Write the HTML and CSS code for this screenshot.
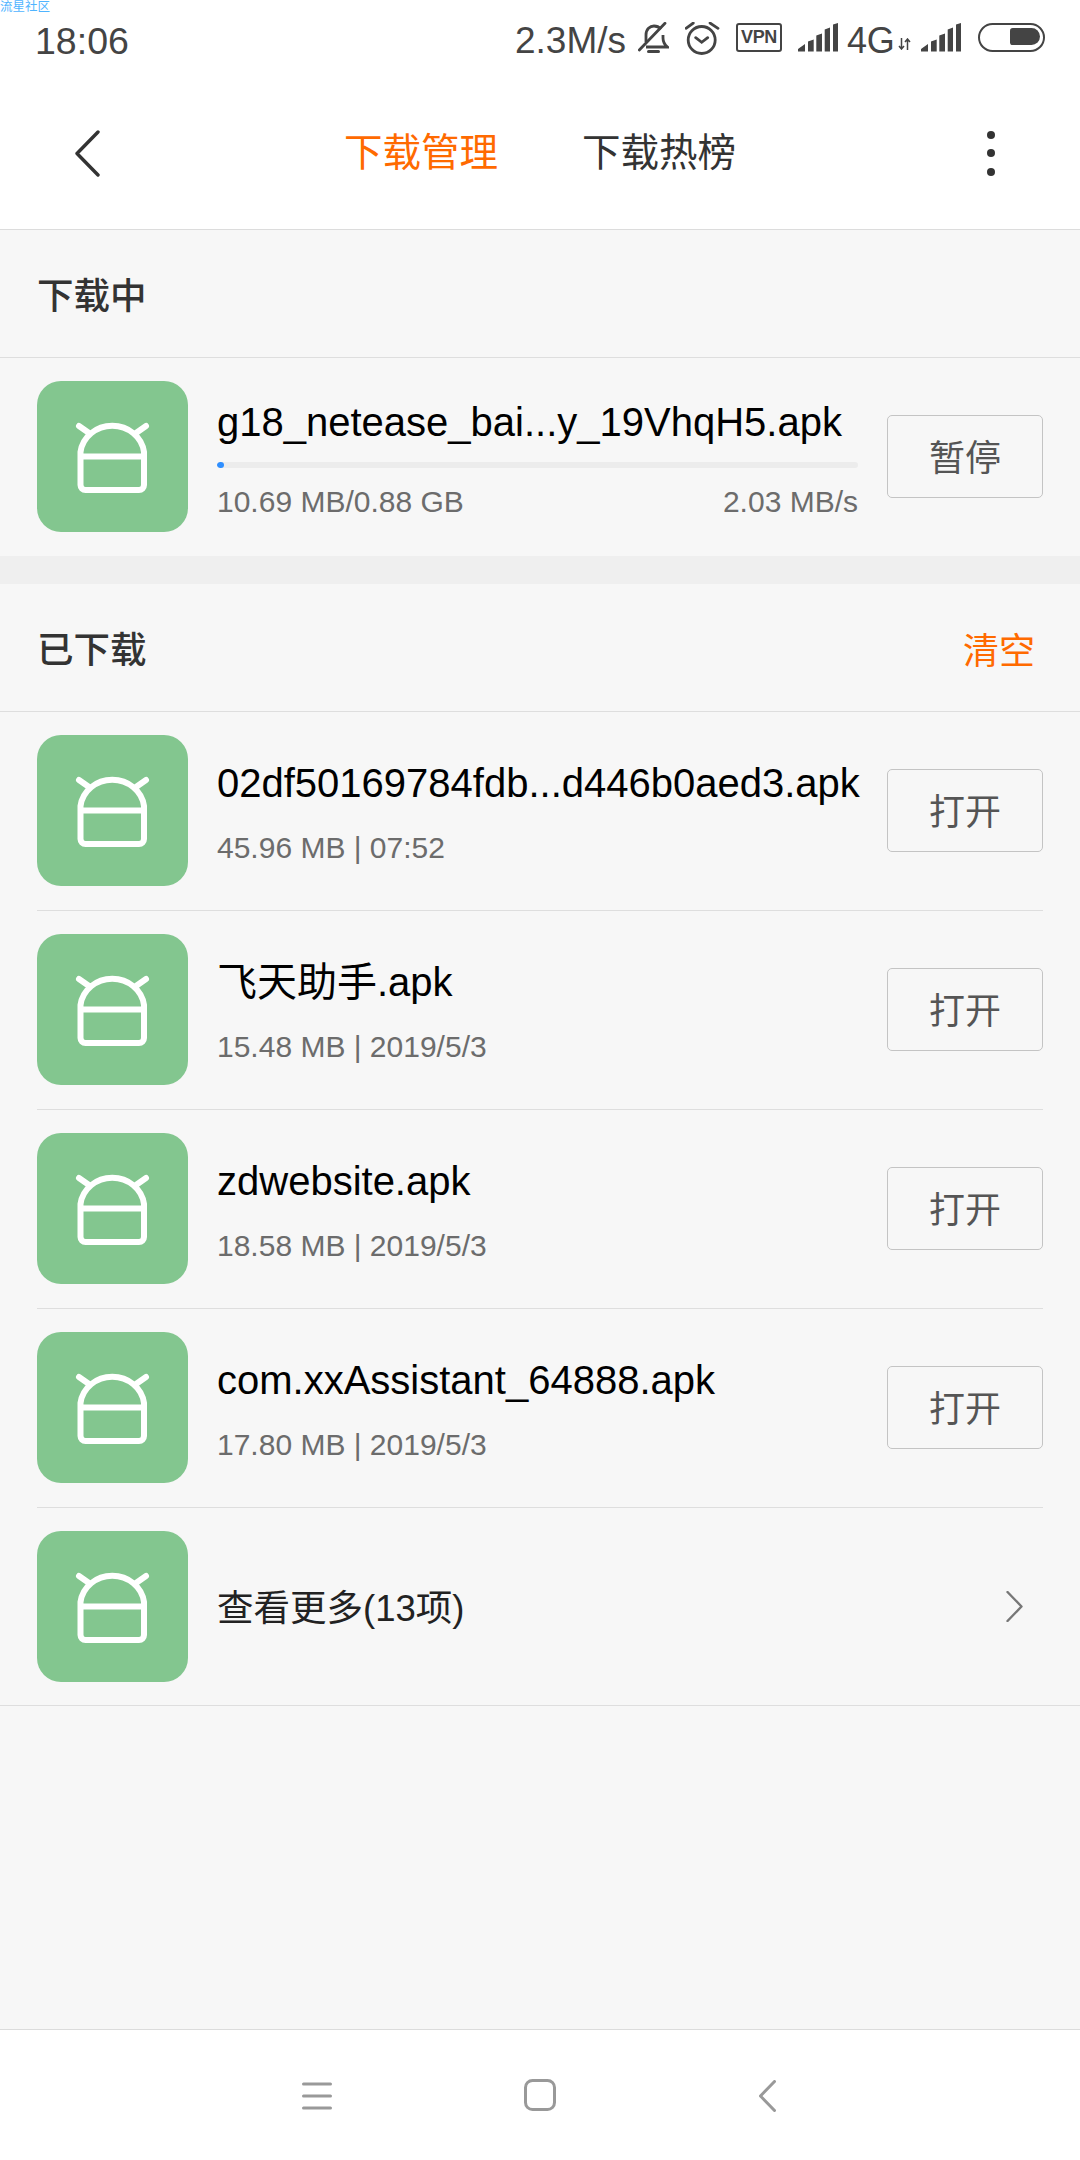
FILE: index.html
```html
<!DOCTYPE html>
<html lang="zh-CN">
<head>
<meta charset="utf-8">
<title>下载管理</title>
<link rel="stylesheet" href="styles.css">
</head>
<body>
<svg class="defs" width="0" height="0" aria-hidden="true">
  <defs>
    <symbol id="apk" viewBox="0 0 151 151">
      <path d="M43.500 75.500V71A32 30 0 0 1 107 71V75.500M43.500 75.500H107V104A5 5 0 0 1 102 109H48.500A5 5 0 0 1 43.500 104ZM42 45L52 52M109 45L99 52" fill="none" stroke="#fff" stroke-width="6" stroke-linecap="round" stroke-linejoin="round"/>
    </symbol>
    <symbol id="signal" viewBox="0 0 40 29">
      <path d="M0 28.500V26L7 21V28.500ZM10 28.500V18.500L15.700 16.500V28.500ZM18.300 28.500V12.500L24 10.500V28.500ZM26.700 28.500V6.500L32 4.500V28.500ZM35 28.500V1.500L40 0V28.500Z" fill="#444"/>
    </symbol>
  </defs>
</svg>
<div class="app">
  <span class="watermark">流星社区</span>
  <div class="statusbar">
    <span class="time">18:06</span>
    <span class="speed">2.3M/s</span>
    <svg class="st-bell" width="31" height="32" viewBox="0 0 31 32"><path d="M8 20V13C8 7 12 4 16 4C19 4 21 5 23 7M25 13V16C25 20 27 23 29.500 25H8" fill="none" stroke="#444" stroke-width="2.800"/><path d="M1.300 28L27 1.300" stroke="#444" stroke-width="2.800" stroke-linecap="round"/><path d="M10.500 29.500H20.500" stroke="#444" stroke-width="3" stroke-linecap="round"/></svg>
    <svg class="st-alarm" width="35" height="33" viewBox="0 0 35 33"><circle cx="16.700" cy="18" r="13.500" fill="none" stroke="#444" stroke-width="2.800"/><path d="M10.700 15.700L16.700 20.300L22.700 15.700M1 6.300L8.300 1M33 6.300L25 1" fill="none" stroke="#444" stroke-width="2.800" stroke-linecap="round"/></svg>
    <span class="st-vpn">VPN</span>
    <svg class="st-signal" width="40" height="29"><use href="#signal"/></svg>
    <span class="net">4G</span>
    <svg class="st-arrows" width="13" height="12" viewBox="0 0 13 12"><path d="M3.500 0V11M1 8L3.500 11L6 8M9.500 12V1M7 4L9.500 1L12 4" fill="none" stroke="#444" stroke-width="1.500"/></svg>
    <svg class="st-signal2" width="40" height="29"><use href="#signal"/></svg>
    <span class="battery"><span class="battery-fill"></span></span>
  </div>
  <header class="topbar">
    <svg class="back" width="25" height="47" viewBox="0 0 25 47"><path d="M23 2L2 23.500L23 45" fill="none" stroke="#333" stroke-width="3.400" stroke-linecap="round" stroke-linejoin="round"/></svg>
    <nav class="tabs">
      <span class="tab tab-active">下载管理</span>
      <span class="tab">下载热榜</span>
    </nav>
    <span class="more"><i class="dot"></i><i class="dot"></i><i class="dot"></i></span>
  </header>
  <main class="content">
    <div class="section-head"><span class="section-title">下载中</span></div>
    <div class="row row-flush">
      <div class="tile"><svg width="151" height="151"><use href="#apk"/></svg></div>
      <div class="info info-progress">
        <div class="name">g18_netease_bai...y_19VhqH5.apk</div>
        <div class="progress"><div class="progress-fill"></div></div>
        <div class="meta meta-split"><span>10.69 MB/0.88 GB</span><span>2.03 MB/s</span></div>
      </div>
      <button class="btn">暂停</button>
    </div>
    <div class="band"></div>
    <div class="section-head"><span class="section-title">已下载</span><span class="clear">清空</span></div>
    <div class="row">
      <div class="tile"><svg width="151" height="151"><use href="#apk"/></svg></div>
      <div class="info"><div class="name">02df50169784fdb...d446b0aed3.apk</div><div class="meta">45.96 MB | 07:52</div></div>
      <button class="btn">打开</button>
    </div>
    <div class="row">
      <div class="tile"><svg width="151" height="151"><use href="#apk"/></svg></div>
      <div class="info"><div class="name">飞天助手.apk</div><div class="meta">15.48 MB | 2019/5/3</div></div>
      <button class="btn">打开</button>
    </div>
    <div class="row">
      <div class="tile"><svg width="151" height="151"><use href="#apk"/></svg></div>
      <div class="info"><div class="name">zdwebsite.apk</div><div class="meta">18.58 MB | 2019/5/3</div></div>
      <button class="btn">打开</button>
    </div>
    <div class="row">
      <div class="tile"><svg width="151" height="151"><use href="#apk"/></svg></div>
      <div class="info"><div class="name">com.xxAssistant_64888.apk</div><div class="meta">17.80 MB | 2019/5/3</div></div>
      <button class="btn">打开</button>
    </div>
    <div class="row row-more">
      <div class="tile"><svg width="151" height="151"><use href="#apk"/></svg></div>
      <div class="more-label">查看更多(13项)</div>
      <svg class="chev" width="17" height="31" viewBox="0 0 17 31"><path d="M1.500 1L15.500 15.500L1.500 30" fill="none" stroke="#777" stroke-width="2.400" stroke-linecap="round" stroke-linejoin="round"/></svg>
    </div>
  </main>
  <footer class="navbar">
    <svg class="nav-menu" width="30" height="28" viewBox="0 0 30 28"><path d="M1.500 2H28.500M1.500 14H28.500M1.500 26H28.500" stroke="#999" stroke-width="3" stroke-linecap="round"/></svg>
    <svg class="nav-home" width="32" height="32" viewBox="0 0 32 32"><rect x="1.500" y="1.500" width="29" height="29" rx="7" fill="none" stroke="#999" stroke-width="3"/></svg>
    <svg class="nav-back" width="17" height="32" viewBox="0 0 17 32"><path d="M15.500 1.500L1.500 16L15.500 30.500" fill="none" stroke="#999" stroke-width="3" stroke-linecap="round" stroke-linejoin="round"/></svg>
  </footer>
</div>
</body>
</html>
```

FILE: styles.css
```css
* { box-sizing: border-box; }
html, body { margin: 0; padding: 0; }
body { font-family: "Liberation Sans", "Noto Sans CJK SC", sans-serif; background: #fff; }
.defs { position: absolute; }
.app { position: relative; width: 1080px; height: 2160px; display: flex; flex-direction: column; background: #fff; overflow: hidden; }
.watermark { position: absolute; left: 0; top: 0; font-size: 12.500px; line-height: 14px; color: #4fb4ff; }

.statusbar { height: 76px; flex: none; display: flex; align-items: flex-start; padding-left: 35px; color: #444; font-size: 37px; line-height: 42px; }
.time { margin-top: 20px; width: 480px; font-size: 37.500px; }
.speed { margin-top: 20px; width: 117px; }
.st-bell { margin-top: 22px; margin-left: 6px; }
.st-alarm { margin-top: 22px; margin-left: 16px; }
.st-vpn { margin-top: 23px; margin-left: 16px; width: 46px; height: 29px; border: 2.500px solid #444; border-radius: 3px; font-size: 18px; line-height: 24px; font-weight: 700; text-align: center; letter-spacing: -0.300px; }
.st-signal { margin-top: 23px; margin-left: 16px; }
.net { margin-top: 20px; margin-left: 9px; width: 46px; font-size: 36px; letter-spacing: -0.300px; }
.st-arrows { margin-top: 38px; margin-left: 5px; }
.st-signal2 { margin-top: 23px; margin-left: 10px; }
.battery { margin-top: 23px; margin-left: 17px; width: 67px; height: 29px; border: 2.800px solid #444; border-radius: 15px; padding: 3px; display: flex; justify-content: flex-end; }
.battery-fill { width: 30px; height: 17.400px; background: #444; border-radius: 3px 9px 9px 3px; }

.topbar { height: 154px; flex: none; display: flex; align-items: flex-start; padding-left: 75px; border-bottom: 1px solid #dcdcdc; }
.back { margin-top: 54px; }
.tabs { display: flex; gap: 84px; margin-left: 244px; margin-top: 54px; }
.tab { font-size: 38.500px; line-height: 46px; color: #333; }
.tab-active { color: #ff6a00; }
.more { margin-left: auto; margin-right: 85px; margin-top: 54.500px; display: flex; flex-direction: column; gap: 10.500px; }
.dot { display: block; width: 8px; height: 8px; border-radius: 50%; background: #333; }

.content { flex: 1; background: #f7f7f7; display: flex; flex-direction: column; }
.section-head { height: 128px; flex: none; display: flex; align-items: center; justify-content: space-between; padding: 0 45px 0 37px; border-bottom: 1px solid #dedede; }
.section-title { font-size: 36.500px; font-weight: 500; color: #333; }
.clear { font-size: 36px; color: #ff6a00; }

.row { height: 199px; flex: none; margin: 0 37px; display: flex; align-items: center; border-bottom: 1px solid #dedede; }
.row-flush { border-bottom: 0; height: 198px; }
.row-more { margin: 0; padding: 0 37px; height: 198px; }
.tile { width: 151px; height: 151px; flex: none; background: #83c68f; border-radius: 24px; margin-top: -1px; }
.tile svg { display: block; }
.info { width: 641px; margin-left: 29px; flex: none; padding-top: 6px; }
.info-progress { padding-top: 7px; }
.name { font-size: 40px; line-height: 42px; color: #000; white-space: nowrap; }
.meta { margin-top: 26px; font-size: 30px; line-height: 36px; color: #6c6c6c; }
.meta-split { display: flex; justify-content: space-between; margin-top: 16px; }
.progress { height: 6px; margin-top: 19px; background: #ececec; border-radius: 3px; overflow: hidden; }
.progress-fill { width: 7px; height: 6px; background: #2f8fff; border-radius: 3px; }
.btn { width: 156px; height: 83px; margin-left: 29px; margin-top: -2px; flex: none; padding: 0 0 2px; background: transparent; border: 1px solid #c4c4c4; border-radius: 5px; font-family: inherit; font-size: 36px; color: #555; }
.band { height: 28px; flex: none; background: #efefef; }
.more-label { margin-left: 29px; margin-top: -2px; font-size: 36.500px; color: #222; }
.chev { margin-left: auto; margin-right: 20px; }

.navbar { height: 131px; flex: none; display: flex; align-items: flex-start; padding-left: 302px; background: #fff; border-top: 1px solid #dcdcdc; }
.nav-menu { margin-top: 52px; }
.nav-home { margin-top: 49px; margin-left: 192px; }
.nav-back { margin-top: 50px; margin-left: 203px; }
```
